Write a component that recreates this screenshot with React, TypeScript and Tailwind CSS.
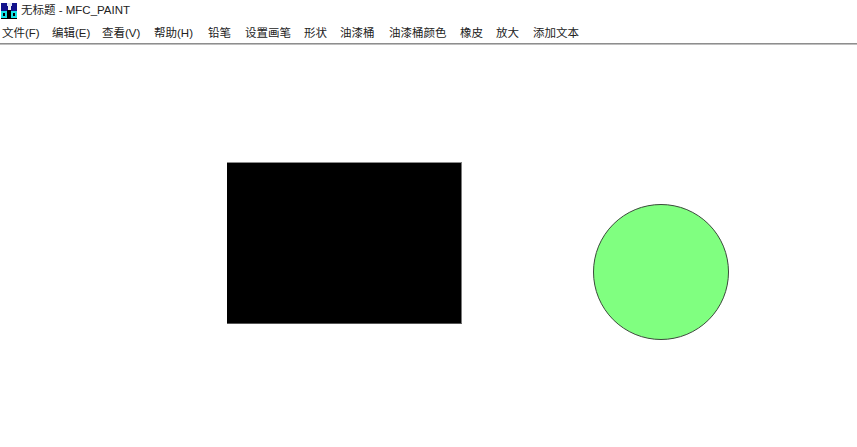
const menus = [
  { label: '文件(F)', width: 'w-[50px]' },
  { label: '编辑(E)', width: 'w-[50px]' },
  { label: '查看(V)', width: 'w-[52px]' },
  { label: '帮助(H)', width: 'w-[54px]' },
  { label: '铅笔', width: 'w-[37px]' },
  { label: '设置画笔', width: 'w-[59px]' },
  { label: '形状', width: 'w-[36px]' },
  { label: '油漆桶', width: 'w-[49px]' },
  { label: '油漆桶颜色', width: 'w-[71px]' },
  { label: '橡皮', width: 'w-[36px]' },
  { label: '放大', width: 'w-[37px]' },
  { label: '添加文本', width: 'w-[60px]' },
];

const AppIcon = () => (
  <svg width="16" height="16" viewBox="0 0 16 16" className="shrink-0">
    <rect width="16" height="16" fill="#12128c" />
    <rect x="6" y="0" width="5" height="3" fill="#dfe6f5" />
    <rect x="7" y="3" width="3" height="4" fill="#f2f2f2" />
    <rect x="0" y="8" width="6" height="7" fill="#16e4e8" />
    <rect x="10" y="8" width="6" height="7" fill="#16e4e8" />
    <rect x="6" y="7" width="4" height="9" fill="#000000" />
    <rect x="2" y="10" width="2" height="3" fill="#000000" />
    <rect x="12" y="10" width="2" height="3" fill="#000000" />
    <rect x="0" y="15" width="16" height="1" fill="#000000" />
  </svg>
);

export default function App() {
  return (
    <div className="flex h-[447px] w-[857px] flex-col overflow-hidden bg-white font-['Liberation_Sans','Noto_Sans_CJK_SC',sans-serif] text-[#222222]">
      <div className="flex h-[21px] items-center gap-[4px] pl-[1px] pt-[1px]">
        <AppIcon />
        <span className="text-[11.5px] leading-none">无标题 - MFC_PAINT</span>
      </div>
      <div className="flex h-[22px] items-center pl-[2px] pt-[3px] text-[11.5px]">
        {menus.map(m => (
          <span key={m.label} className={`${m.width} shrink-0 whitespace-nowrap`}>
            {m.label}
          </span>
        ))}
      </div>
      <div className="h-[2px] bg-gradient-to-b from-[#777777] to-[#d8d8d8]" />

      {/* Canvas */}
      <div className="relative flex-1 bg-white">
        <div className="absolute left-[227px] top-[117px] h-[162px] w-[235px] border-t border-r border-b border-t-[#8c8c8c] border-r-[#7a7a7a] border-b-[#555555] bg-black" />
        <div className="absolute left-[593px] top-[159px] h-[136px] w-[136px] rounded-full border border-[#3a4a3a] bg-[#80ff80]" />
      </div>
    </div>
  );
}
